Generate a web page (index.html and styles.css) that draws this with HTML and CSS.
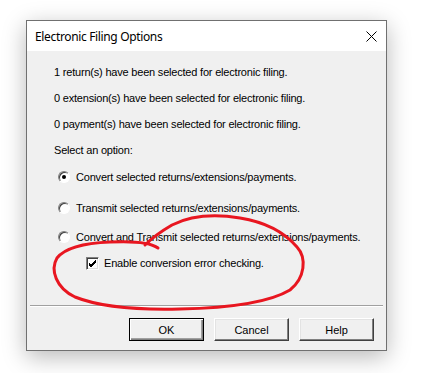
FILE: index.html
```html
<!DOCTYPE html>
<html>
<head>
<meta charset="utf-8">
<link rel="stylesheet" href="styles.css">
</head>
<body>
<div class="win">
  <div class="titlebar">
    <span class="title">Electronic Filing Options</span>
    <svg class="close" width="11" height="11" viewBox="0 0 11 11"><path d="M0.5 0.5 L10.5 10.5 M10.5 0.5 L0.5 10.5" stroke="#000" stroke-width="1"/></svg>
  </div>
  <div class="body">
    <div class="row r1">1 return(s) have been selected for electronic filing.</div>
    <div class="row">0 extension(s) have been selected for electronic filing.</div>
    <div class="row">0 payment(s) have been selected for electronic filing.</div>
    <div class="row">Select an option:</div>
    <div class="row opt o1"><span class="radio checked"></span>Convert selected returns/extensions/payments.</div>
    <div class="row opt o2"><span class="radio"></span>Transmit selected returns/extensions/payments.</div>
    <div class="row opt o3"><span class="radio"></span>Convert and Transmit selected returns/extensions/payments.</div>
    <div class="row chk"><span class="box"><svg width="9" height="9" viewBox="0 0 9 9"><path d="M1 4 L3 6 L8 1 M1 5 L3 7 L8 2 M1 6 L3 8 L8 3" stroke="#000" stroke-width="1" fill="none"/></svg></span>Enable conversion error checking.</div>
    <div class="sep"></div>
    <div class="buttons">
      <button class="btn default">OK</button>
      <button class="btn">Cancel</button>
      <button class="btn">Help</button>
    </div>
  </div>
</div>
<svg class="ink" width="431" height="373" viewBox="0 0 431 373">
  <path d="M158,248 C150,242 130,241 110,242 C85,243 65,248 57,258 C50,270 56,288 75,297 C100,307 140,310 180,309 C230,308 270,302 290,290 C305,278 307,258 297,247 C285,233 265,222 240,218 C215,214 190,216 172,225 C160,232 150,240 145,245" fill="none" stroke="#e81620" stroke-width="3" stroke-linecap="round" stroke-linejoin="round"/>
</svg>
</body>
</html>
```
FILE: styles.css
```css
html, body { margin: 0; padding: 0; background: #fff; }
body { width: 431px; height: 373px; overflow: hidden; position: relative; padding: 20px 0 0 26px; box-sizing: border-box; }
.win {
  width: 361px; height: 331px; box-sizing: border-box;
  border: 1px solid #707070; background: #f0f0f0;
  box-shadow: 0 6px 22px rgba(0,0,0,0.28);
  display: flex; flex-direction: column;
}
.titlebar {
  height: 30px; background: #fff; display: flex; align-items: center;
  padding: 0 9px 0 8px; justify-content: space-between;
}
.title { font-family: "Noto Sans", sans-serif; font-size: 12px; letter-spacing: -0.35px; color: #000; }
.body {
  flex: 1; display: flex; flex-direction: column;
  font-family: "Liberation Sans", Arial, sans-serif; font-size: 11px; letter-spacing: -0.2px; color: #000;
  padding: 8px 0 0 27px;
}
.row { height: 26px; display: flex; align-items: center; white-space: nowrap; }
.opt { padding-left: 4px; }
.o1 { margin-top: 1px; }
.o2 { margin-top: 5px; }
.o3 { margin-top: 3px; }
.radio {
  width: 12px; height: 12px; border-radius: 50%; box-sizing: border-box;
  background: #fff; border: 1px solid; border-color: #808080 #fff #fff #808080;
  box-shadow: inset 1px 1px 0 #404040;
  margin-right: 6px; display: inline-flex; align-items: center; justify-content: center;
}
.radio.checked::after { content: ""; width: 4px; height: 4px; border-radius: 50%; background: #000; }
.chk { padding-left: 32px; }
.box {
  width: 13px; height: 13px; box-sizing: border-box; background: #fff;
  border: 1px solid; border-color: #808080 #fff #fff #808080;
  box-shadow: inset 1px 1px 0 #404040, inset -1px -1px 0 #dfdfdf;
  display: inline-flex; align-items: center; justify-content: center;
  margin-right: 5px;
}
.sep { margin: 29px 0 0 -24px; width: 353px; height: 1px; background: #a0a0a0; border-bottom: 1px solid #fff; }
.buttons { display: flex; gap: 10px; margin: 11px 0 0 75px; }
.btn {
  width: 75px; height: 23px; box-sizing: border-box; background: #f0f0f0;
  font-family: "Liberation Sans", Arial, sans-serif; font-size: 11px; color: #000;
  border: 1px solid; border-color: #fff #404040 #404040 #fff;
  box-shadow: inset -1px -1px 0 #808080, inset 1px 1px 0 #e3e3e3;
  padding: 0; margin: 0;
}
.btn.default { border: 1px solid #000; box-shadow: inset 1px 1px 0 #fff, inset -1px -1px 0 #808080, inset -2px -2px 0 #a0a0a0; }
.ink { position: absolute; left: 0; top: 0; pointer-events: none; }
```
